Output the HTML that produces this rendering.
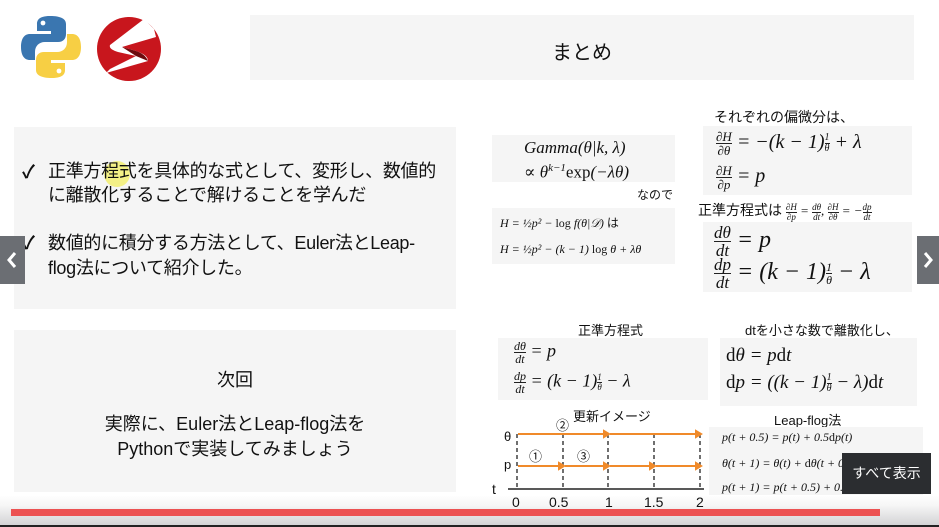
<!DOCTYPE html>
<html><head><meta charset="utf-8"><style>
*{margin:0;padding:0;box-sizing:border-box}
body{width:939px;height:527px;overflow:hidden;background:#fff;position:relative;font-family:"Liberation Sans","Noto Sans CJK JP",sans-serif;color:#111}
.a{position:absolute}
.box{position:absolute;background:#f5f5f5}
.m{font-family:"Liberation Serif","DejaVu Serif",serif;font-style:italic;white-space:nowrap}
.r{font-style:normal}
.fr{display:inline-block;vertical-align:middle;text-align:center;line-height:1}
.fr span{display:block}
.fr span:first-child{border-bottom:1px solid #222}
.jp{font-family:"Liberation Sans","Noto Sans CJK JP",sans-serif;font-style:normal}
.nw{white-space:nowrap}
</style></head><body>
<svg class="a" style="left:20px;top:14px" width="62" height="66" viewBox="0 0 62 66">
<path d="M30 2c-12 0-13 5-13 8v7h14v3H10C4 20 1 25 1 33s3 13 9 13h5v-8c0-6 4-10 10-10h13c5 0 8-3 8-8V10c0-5-5-8-16-8z" fill="#3a76b0"/>
<circle cx="23" cy="9" r="2.4" fill="#fff"/>
<path d="M32 64c12 0 13-5 13-8v-7H31v-3h21c6 0 9-5 9-13s-3-13-9-13h-5v8c0 6-4 10-10 10H24c-5 0-8 3-8 8v10c0 5 5 8 16 8z" fill="#f7cf44"/>
<circle cx="39" cy="57" r="2.4" fill="#fff"/>
</svg>
<svg class="a" style="left:96px;top:15px" width="68" height="68" viewBox="0 0 68 68">
<circle cx="33" cy="34" r="32" fill="#c8161d"/>
<path d="M48 4 L14 30 C13 33 16 35 22 37 L40 41 L14 54 L10 58 L52 46 C52 41 46 38 40 36 L26 32 L60 22 L58 14Z" fill="#fff"/>
<path d="M26 32 L40 36 C46 38 50 41 52 46 L40 41Z" fill="#6e0a0d"/>
</svg>
<div class="box" style="left:250px;top:15px;width:664px;height:65px"></div>
<div class="a" style="left:250px;top:36px;width:664px;text-align:center;font-size:20px">まとめ</div>

<div class="box" style="left:14px;top:127px;width:442px;height:182px"></div>
<div class="a" style="width:26px;height:26px;border-radius:50%;background:#f3ef6a;opacity:.8;left:104px;top:161px"></div>
<div class="a" style="left:22px;top:160px;font-size:18px;line-height:25px;font-weight:bold">✓</div>
<div class="a nw" style="left:48px;top:159px;font-size:18px;line-height:24px;letter-spacing:-0.3px">正準方程式を具体的な式として、変形し、数値的<br>に離散化することで解けることを学んだ</div>
<div class="a" style="left:22px;top:231px;font-size:18px;line-height:25px;font-weight:bold">✓</div>
<div class="a nw" style="left:48px;top:231px;font-size:18px;line-height:25px;letter-spacing:-0.3px">数値的に積分する方法として、Euler法とLeap-<br>flog法について紹介した。</div>

<div class="box" style="left:14px;top:330px;width:442px;height:162px"></div>
<div class="a" style="left:14px;top:366px;width:442px;text-align:center;font-size:18px">次回</div>
<div class="a" style="left:14px;top:412px;width:442px;text-align:center;font-size:18px;line-height:25px">実際に、Euler法とLeap-flog法を<br>Pythonで実装してみましょう</div>

<div class="a" style="left:0;top:236px;width:25px;height:48px;background:#6b6e73"></div>
<svg class="a" style="left:4px;top:250px" width="16" height="20"><path d="M11 3 L5 10 L11 17" stroke="#fff" stroke-width="3" fill="none"/></svg>
<div class="a" style="left:917px;top:236px;width:22px;height:48px;background:#6b6e73"></div>
<svg class="a" style="left:920px;top:250px" width="16" height="20"><path d="M5 3 L11 10 L5 17" stroke="#fff" stroke-width="3" fill="none"/></svg>

<div class="box" style="left:492px;top:135px;width:183px;height:47px"></div>
<div class="a m" style="left:524px;top:138px;font-size:17px;line-height:20px">Gamma(θ|k, λ)<br>∝ θ<sup style="font-size:11px">k−1</sup><span class="r">exp</span>(−λθ)</div>
<div class="a jp" style="left:637px;top:186px;font-size:12px">なので</div>
<div class="box" style="left:492px;top:208px;width:183px;height:56px"></div>
<div class="a m" style="left:500px;top:214px;font-size:12px">H = ½p² − <span class="r">log</span> f(θ|𝒟) <span class="jp">は</span></div>
<div class="a m" style="left:500px;top:242px;font-size:12px">H = ½p² − (k − 1) <span class="r">log</span> θ + λθ</div>

<div class="a jp" style="left:714px;top:107px;font-size:14px">それぞれの偏微分は、</div>
<div class="box" style="left:703px;top:126px;width:209px;height:69px"></div>
<div class="a m" style="left:716px;top:130px;font-size:20px"><span class="fr" style="font-size:13px"><span>∂H</span><span>∂θ</span></span> = −(k − 1)<span class="fr" style="font-size:10px"><span>1</span><span>θ</span></span> + λ</div>
<div class="a m" style="left:716px;top:164px;font-size:20px"><span class="fr" style="font-size:13px"><span>∂H</span><span>∂p</span></span> = p</div>
<div class="a" style="left:698px;top:200px;font-size:14px;white-space:nowrap">正準方程式は <span class="m" style="font-size:13px"><span class="fr" style="font-size:9px"><span>∂H</span><span>∂p</span></span> = <span class="fr" style="font-size:9px"><span>dθ</span><span>dt</span></span>, <span class="fr" style="font-size:9px"><span>∂H</span><span>∂θ</span></span> = −<span class="fr" style="font-size:9px"><span>dp</span><span>dt</span></span></span></div>
<div class="box" style="left:703px;top:222px;width:209px;height:70px"></div>
<div class="a m" style="left:714px;top:224px;font-size:24px"><span class="fr" style="font-size:17px"><span>dθ</span><span>dt</span></span> = p</div>
<div class="a m" style="left:714px;top:256px;font-size:24px"><span class="fr" style="font-size:17px"><span>dp</span><span>dt</span></span> = (k − 1)<span class="fr" style="font-size:12px"><span>1</span><span>θ</span></span> − λ</div>

<div class="a jp" style="left:578px;top:320px;font-size:13px">正準方程式</div>
<div class="box" style="left:498px;top:338px;width:210px;height:62px"></div>
<div class="a m" style="left:514px;top:340px;font-size:18px"><span class="fr" style="font-size:12px"><span>dθ</span><span>dt</span></span> = p</div>
<div class="a m" style="left:514px;top:370px;font-size:18px"><span class="fr" style="font-size:12px"><span>dp</span><span>dt</span></span> = (k − 1)<span class="fr" style="font-size:9px"><span>1</span><span>θ</span></span> − λ</div>

<div class="a jp" style="left:745px;top:320px;font-size:13px">dtを小さな数で離散化し、</div>
<div class="box" style="left:720px;top:338px;width:197px;height:68px"></div>
<div class="a m" style="left:726px;top:345px;font-size:19px"><span class="r">d</span>θ = p<span class="r">d</span>t</div>
<div class="a m" style="left:726px;top:372px;font-size:19px"><span class="r">d</span>p = ((k − 1)<span class="fr" style="font-size:10px"><span>1</span><span>θ</span></span> − λ)<span class="r">d</span>t</div>

<div class="a jp" style="left:774px;top:410px;font-size:13px">Leap-flog法</div>
<div class="box" style="left:709px;top:427px;width:214px;height:68px"></div>
<div class="a m" style="left:722px;top:430px;font-size:12px">p(t + 0.5) = p(t) + 0.5<span class="r">d</span>p(t)</div>
<div class="a m" style="left:722px;top:456px;font-size:12px">θ(t + 1) = θ(t) + <span class="r">d</span>θ(t + 0.5)</div>
<div class="a m" style="left:722px;top:480px;font-size:12px">p(t + 1) = p(t + 0.5) + 0.5<span class="r">d</span>p(t + 1)</div>

<div class="a" style="left:0;top:496px;width:939px;height:31px;background:linear-gradient(#fefefe,#f6f6f6 30%,#d0d0d2)"></div>

<div class="a jp" style="left:573px;top:406px;font-size:13px">更新イメージ</div>
<div class="a" style="left:556px;top:415px;font-size:13px">②</div>
<div class="a" style="left:529px;top:446px;font-size:13px">①</div>
<div class="a" style="left:577px;top:446px;font-size:13px">③</div>
<div class="a" style="left:504px;top:429px;font-size:13px">θ</div>
<div class="a" style="left:504px;top:457px;font-size:13px">p</div>
<div class="a" style="left:492px;top:481px;font-size:14px">t</div>
<svg class="a" style="left:500px;top:420px" width="210" height="78">
<g stroke="#222" stroke-dasharray="4 3" stroke-width="1.3"><line x1="17" y1="14" x2="17" y2="69"/><line x1="63" y1="14" x2="63" y2="69"/><line x1="108" y1="14" x2="108" y2="69"/><line x1="154" y1="14" x2="154" y2="69"/><line x1="200" y1="14" x2="200" y2="69"/></g>
<line x1="8" y1="69" x2="204" y2="69" stroke="#222" stroke-width="1.5"/>
<g stroke="#f08a2a" stroke-width="2" fill="#f08a2a">
<line x1="18" y1="14" x2="104" y2="14"/><path d="M104 11 L109 14 L104 17Z"/>
<line x1="110" y1="14" x2="196" y2="14"/><path d="M196 11 L201 14 L196 17Z"/>
<line x1="18" y1="46" x2="59" y2="46"/><path d="M59 43 L64 46 L59 49Z"/>
<line x1="65" y1="46" x2="104" y2="46"/><path d="M104 43 L109 46 L104 49Z"/>
<line x1="110" y1="46" x2="150" y2="46"/><path d="M150 43 L155 46 L150 49Z"/>
<line x1="156" y1="46" x2="196" y2="46"/><path d="M196 43 L201 46 L196 49Z"/>
</g></svg>
<div class="a" style="left:512px;top:494px;font-size:14px">0</div>
<div class="a" style="left:549px;top:494px;font-size:14px">0.5</div>
<div class="a" style="left:605px;top:494px;font-size:14px">1</div>
<div class="a" style="left:644px;top:494px;font-size:14px">1.5</div>
<div class="a" style="left:696px;top:494px;font-size:14px">2</div>

<div class="a" style="left:842px;top:453px;width:89px;height:41px;background:#2b2d30;color:#fff;font-size:14px;line-height:41px;text-align:center">すべて表示</div>
<div class="a" style="left:11px;top:509px;width:869px;height:7px;background:#ec5252"></div>
<div class="a" style="left:0;top:525px;width:939px;height:2px;background:#222"></div>
</body></html>
